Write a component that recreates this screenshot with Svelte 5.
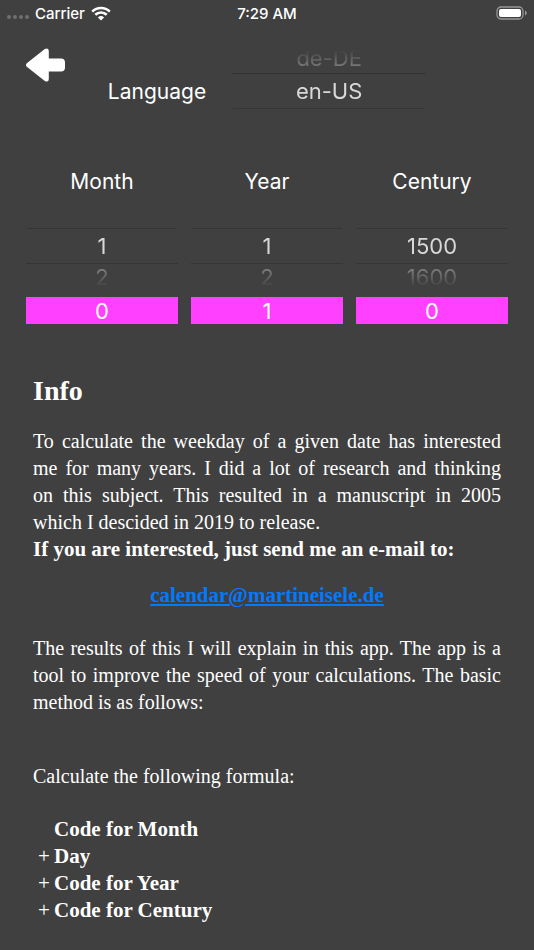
<script lang="ts">
    const languages = ["de-DE", "en-US"];
    const months = Array.from({ length: 12 }, (_, i) => i + 1);
    const years = Array.from({ length: 99 }, (_, i) => i + 1);
    const centuries = [1500, 1600, 1700, 1800, 1900, 2000, 2100];

    const monthCodes = [0, 3, 3, 6, 1, 4, 6, 2, 5, 0, 3, 5];
    const centuryCodes = [6, 4, 2, 0];

    let language = "en-US";
    let month = 1;
    let year = 1;
    let century = 1500;

    $: monthCode = monthCodes[month - 1];
    $: yearCode = (year + Math.floor(year / 4)) % 7;
    $: centuryCode = centuryCodes[(century / 100) % 4];
</script>

<div class="statusbar">
    <div class="carrier">
        <svg class="dots" viewBox="0 0 22 4" aria-hidden="true">
            <circle cx="2" cy="2" r="2" />
            <circle cx="8" cy="2" r="2" />
            <circle cx="14" cy="2" r="2" />
            <circle cx="20" cy="2" r="2" />
        </svg>
        <span>Carrier</span>
        <svg class="wifi" viewBox="0 0 20 15" aria-hidden="true">
            <path d="M1.2 5.6a12.6 12.6 0 0 1 17.6 0" />
            <path d="M4.3 8.8a8.2 8.2 0 0 1 11.4 0" />
            <path class="fan" d="M10 14.6l-3.1-3.1a4.5 4.5 0 0 1 6.2 0z" />
        </svg>
    </div>
    <span>7:29 AM</span>
    <svg class="battery" viewBox="0 0 31 14" aria-hidden="true">
        <rect class="case" x="1" y="1" width="26" height="12" rx="4" />
        <rect x="3" y="3" width="22" height="8" rx="2" />
        <path class="cap" d="M29 4.5q1.8.8 1.8 2.5T29 9.5z" />
    </svg>
</div>

<header>
    <button class="back" aria-label="Back">
        <svg viewBox="0 0 39 34" aria-hidden="true">
            <path
                d="M.8 15.2 18.8 1.1Q22.7-.8 22.8 3v7.5H35q4 0 4 4v5q0 4-4 4H22.8V31q-.1 3.8-4 1.9L.8 18.8q-1.6-1.8 0-3.6z"
            />
        </svg>
    </button>
    <div class="language">
        <label for="language">Language</label>
        <select id="language" class="last" size="2" bind:value={language}>
            {#each languages as l}
                <option value={l}>{l}</option>
            {/each}
        </select>
    </div>
</header>

<main>
    <div class="pickers">
        <div class="picker">
            <label for="month">Month</label>
            <select id="month" size="2" bind:value={month}>
                {#each months as m}
                    <option value={m}>{m}</option>
                {/each}
            </select>
            <output for="month">{monthCode}</output>
        </div>
        <div class="picker">
            <label for="year">Year</label>
            <select id="year" size="2" bind:value={year}>
                {#each years as y}
                    <option value={y}>{y}</option>
                {/each}
            </select>
            <output for="year">{yearCode}</output>
        </div>
        <div class="picker">
            <label for="century">Century</label>
            <select id="century" size="2" bind:value={century}>
                {#each centuries as c}
                    <option value={c}>{c}</option>
                {/each}
            </select>
            <output for="century">{centuryCode}</output>
        </div>
    </div>

    <article>
        <h1>Info</h1>
        <p>
            To calculate the weekday of a given date has interested me for many
            years. I did a lot of research and thinking on&nbsp;this&nbsp;subject.
            This resulted in a manuscript in 2005 which&nbsp;I&nbsp;descided in
            2019 to release.<br />
            <b>If you are interested, just send me an e-mail to:</b>
        </p>
        <p class="mail">
            <a href="mailto:calendar@martineisele.de">calendar@martineisele.de</a>
        </p>
        <p>
            The results of this I will explain in this app. The app is a tool to
            improve the speed of your calculations. The basic method is as
            follows:
        </p>
        <p class="formula-intro">Calculate the following formula:</p>
        <ul>
            <li><span></span>Code for Month</li>
            <li><span>+</span>Day</li>
            <li><span>+</span>Code for Year</li>
            <li><span>+</span>Code for Century</li>
        </ul>
    </article>
</main>

<style>
    :global(body) {
        background: #404040;
        color: #fff;
        font-family: Inter, "Liberation Sans", sans-serif;
        font-size: 22px;
    }

    .statusbar {
        display: grid;
        grid-template-columns: 1fr auto 1fr;
        align-items: center;
        height: 26px;
        padding: 0 7px;
        font-size: 15px;
        font-weight: 500;
    }

    .carrier {
        display: flex;
        align-items: center;
        gap: 6px;
    }

    .dots {
        width: 22px;
        height: 4px;
        margin-top: 8px;
        fill: #707070;
    }

    .wifi {
        width: 20px;
        height: 15px;
        fill: none;
        stroke: #fff;
        stroke-width: 2.6;
    }

    .wifi .fan {
        fill: #fff;
        stroke: none;
    }

    .battery {
        width: 31px;
        height: 14px;
        justify-self: end;
        fill: #fff;
    }

    .battery .case {
        fill: none;
        stroke: #969696;
        stroke-width: 1.3;
    }

    .battery .cap {
        fill: #969696;
    }

    header {
        display: grid;
        grid-template-columns: 1fr auto 1fr;
        align-items: start;
        padding: 19px 26px 0;
    }

    .back {
        width: 39px;
        height: 34px;
        margin-top: 3px;
        padding: 0;
        border: none;
        background: none;
        cursor: pointer;
    }

    .back svg {
        display: block;
        fill: #fff;
    }

    .language {
        display: flex;
        align-items: flex-end;
        gap: 26px;
    }

    label {
        font-size: 21px;
        line-height: 34px;
    }

    .language select {
        width: 194px;
    }

    select {
        display: block;
        box-sizing: border-box;
        width: 100%;
        height: 64px;
        padding: 0;
        border: none;
        outline: none;
        appearance: none;
        background: none;
        font: inherit;
        text-align: center;
        overflow: hidden;
        scrollbar-width: none;
        mask-image: linear-gradient(#000 36px, #000c 37px, transparent 59px);
    }

    select.last {
        mask-image: linear-gradient(transparent 5px, #000c 27px, #000 28px);
    }

    option {
        box-sizing: border-box;
        height: 28px;
        min-height: 28px;
        padding: 0;
        -webkit-text-fill-color: #a0a0a0;
    }

    option:checked {
        height: 36px;
        padding-top: 4px;
        border-top: 1px solid #353535;
        border-bottom: 1px solid #353535;
        background: linear-gradient(#404040, #404040);
        -webkit-text-fill-color: #d8d8d8;
    }

    .pickers {
        display: grid;
        grid-template-columns: repeat(3, 1fr);
        gap: 13px;
        padding: 56px 26px 0;
        text-align: center;
    }

    .picker label {
        display: block;
        margin-bottom: 29px;
    }

    output {
        display: block;
        margin-top: 5px;
        padding-top: 1px;
        background: #ff40ff;
        line-height: 26px;
    }

    article {
        padding: 49px 33px 26px;
        font-family: "Liberation Serif", serif;
        font-size: 20px;
        line-height: 27px;
    }

    h1 {
        margin: 0 0 19px;
        font-size: 28px;
        line-height: 36px;
    }

    p {
        margin: 0;
        text-align: justify;
    }

    b,
    .mail,
    ul {
        font-size: 21px;
        font-weight: bold;
    }

    .mail {
        margin: 19px 0 26px;
        text-align: center;
    }

    a {
        color: #007aff;
    }

    .formula-intro {
        margin: 47px 0 26px;
    }

    ul {
        margin: 0;
        padding: 0 0 0 5px;
        list-style: none;
    }

    li {
        display: flex;
    }

    li span {
        width: 16px;
        font-weight: normal;
    }
</style>
